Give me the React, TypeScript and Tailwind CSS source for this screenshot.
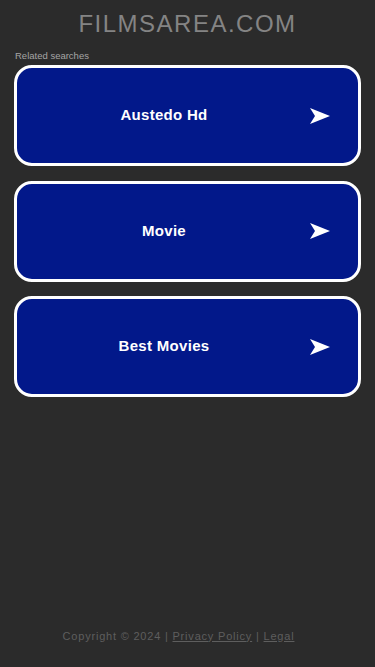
import React from "react";

const items = ["Austedo Hd", "Movie", "Best Movies"];

function Arrow() {
  return (
    <svg width="20" height="16" viewBox="0 0 20 16">
      <path d="M0 0 L20 8 L0 16 L5 8 Z" fill="#ffffff" />
    </svg>
  );
}

export default function App() {
  return (
    <div
      className="min-h-[667px] bg-[#2b2b2b] flex flex-col"
      style={{ fontFamily: '"Liberation Sans", Arial, sans-serif' }}
    >
      <div className="pt-[10px] text-center text-[24px] leading-[28px] tracking-[1.5px] text-[#848484]">
        FILMSAREA.COM
      </div>
      <div className="mt-[12px] px-[15px] text-[9.5px] leading-[12px] text-[#a5a5a5]">
        Related searches
      </div>
      <div className="mt-[3px] px-[14px] flex flex-col gap-[14.5px]">
        {items.map((t) => (
          <div
            key={t}
            className="h-[101px] rounded-[18px] border-[3px] border-white bg-[#02188a] flex items-center"
          >
            <span className="flex-1 pl-[27px] text-center text-white font-bold text-[15px] tracking-[0.3px]">{t}</span>
            <div className="w-[46px] mr-[28px] flex justify-end">
              <Arrow />
            </div>
          </div>
        ))}
      </div>
      <div className="mt-auto pb-[23px] pr-[18px] text-center text-[11px] tracking-[0.8px] text-[#5e5e5e]">
        Copyright © 2024 | <span className="underline">Privacy Policy</span> | <span className="underline">Legal</span>
      </div>
    </div>
  );
}
